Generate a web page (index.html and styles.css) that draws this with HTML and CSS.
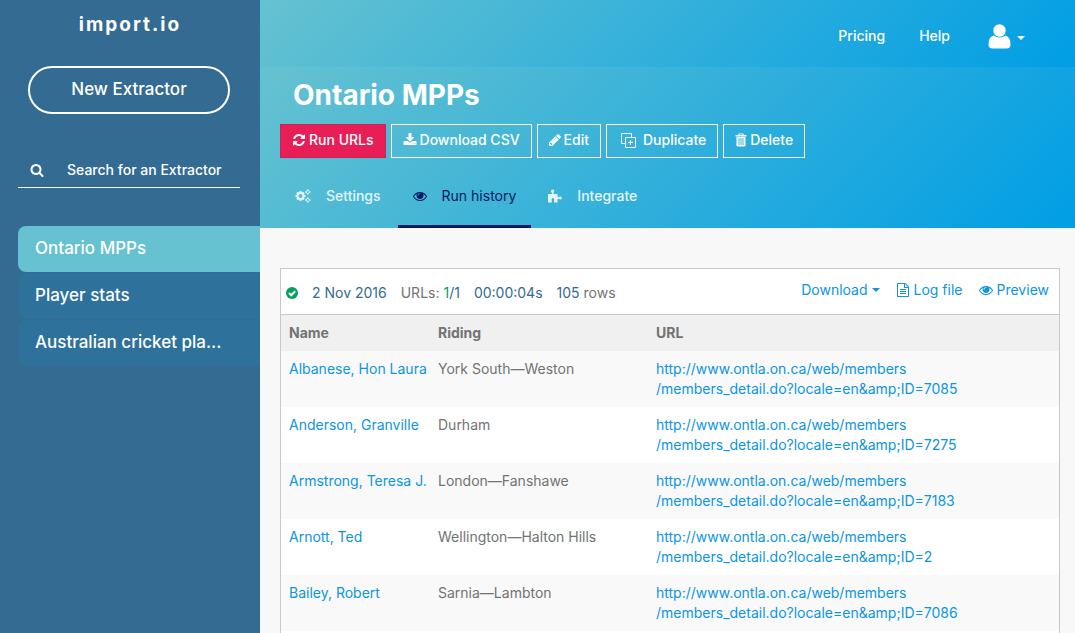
FILE: index.html
```html
<!DOCTYPE html>
<html lang="en">
<head>
<meta charset="utf-8">
<meta name="viewport" content="width=device-width, initial-scale=1">
<title>Ontario MPPs - import.io</title>
<link rel="stylesheet" href="styles.css">
</head>
<body>
<svg class="sprite" aria-hidden="true">
  <symbol id="eye" viewBox="0 0 1792 1792"><path d="M1664 960q-152-236-381-353 61 104 61 225 0 185-131.5 316.5t-316.5 131.5-316.5-131.5-131.5-316.5q0-121 61-225-229 117-381 353 133 205 333.5 326.5t434.5 121.5 434.5-121.5 333.5-326.5zm-720-384q0-20-14-34t-34-14q-125 0-214.5 89.5t-89.5 214.5q0 20 14 34t34 14 34-14 14-34q0-86 61-147t147-61q20 0 34-14t14-34zm848 384q0 34-20 69-140 230-376.5 368.5t-499.5 138.5-499.5-139-376.5-368q-20-35-20-69t20-69q140-229 376.5-368t499.5-139 499.5 139 376.5 368q20 35 20 69z"/></symbol>
</svg>
<div class="app">
  <aside class="sidebar">
    <a class="logo" href="#">import.io</a>
    <button class="new-extractor" type="button">New Extractor</button>
    <label class="search">
      <svg class="icon" viewBox="0 0 1792 1792" aria-hidden="true"><path d="M1216 832q0-185-131.5-316.5t-316.5-131.5-316.5 131.5-131.5 316.5 131.5 316.5 316.5 131.5 316.5-131.5 131.5-316.5zm512 832q0 52-38 90t-90 38q-54 0-90-38l-343-342q-179 124-399 124-143 0-273.5-55.5t-225-150-150-225-55.5-273.5 55.5-273.5 150-225 225-150 273.5-55.5 273.5 55.5 225 150 150 225 55.5 273.5q0 220-124 399l343 343q37 37 37 90z"/></svg>
      <input type="text" placeholder="Search for an Extractor" aria-label="Search for an Extractor">
    </label>
    <nav class="extractors">
      <a class="extractor active" href="#">Ontario MPPs</a>
      <a class="extractor" href="#">Player stats</a>
      <a class="extractor" href="#">Australian cricket pla...</a>
    </nav>
  </aside>
  <main class="main">
    <nav class="topbar">
      <a href="#">Pricing</a>
      <a href="#">Help</a>
      <button class="account" type="button" aria-label="Account">
        <svg class="user" viewBox="0 0 23 25" aria-hidden="true"><circle cx="11.500" cy="6.500" r="6.200"/><path d="M5.500 11.500Q11.500 15.500 17.500 11.500Q22.500 13 22.500 20.500Q22.500 24.500 18.500 24.500H4.500Q.5 24.500 .5 20.500Q.5 13 5.500 11.500Z"/></svg>
        <span class="caret"></span>
      </button>
    </nav>
    <header class="hero">
      <h1>Ontario MPPs</h1>
      <div class="actions">
        <button class="btn primary" type="button"><svg class="icon" viewBox="0 0 1792 1792" aria-hidden="true"><path d="M1639 1056q0 5-1 7-64 268-268 434.5t-478 166.500q-146 0-282.500-55t-243.500-157l-129 129q-19 19-45 19t-45-19-19-45v-448q0-26 19-45t45-19h448q26 0 45 19t19 45-19 45l-137 137q71 66 161 102t187 36q134 0 250-65t186-179q11-17 53-117 8-23 30-23h192q13 0 22.500 9.500t9.500 22.500zm25-800v448q0 26-19 45t-45 19h-448q-26 0-45-19t-19-45 19-45l138-138q-148-137-349-137-134 0-250 65t-186 179q-11 17-53 117-8 23-30 23h-199q-13 0-22.500-9.500t-9.500-22.500v-7q65-268 270-434.500t480-166.500q146 0 284 55.500t245 156.500l130-129q19-19 45-19t45 19 19 45z"/></svg>Run URLs</button>
        <button class="btn" type="button"><svg class="icon" viewBox="0 0 1792 1792" aria-hidden="true"><path d="M1344 1344q0-26-19-45t-45-19-45 19-19 45 19 45 45 19 45-19 19-45zm256 0q0-26-19-45t-45-19-45 19-19 45 19 45 45 19 45-19 19-45zm128-224v320q0 40-28 68t-68 28h-1472q-40 0-68-28t-28-68v-320q0-40 28-68t68-28h465l135 136q58 56 136 56t136-56l136-136h464q40 0 68 28t28 68zm-325-569q17 41-14 70l-448 448q-18 19-45 19t-45-19l-448-448q-31-29-14-70 17-39 59-39h256v-448q0-26 19-45t45-19h256q26 0 45 19t19 45v448h256q42 0 59 39z"/></svg>Download CSV</button>
        <button class="btn" type="button"><svg class="icon pencil" viewBox="128 128 1536 1536" aria-hidden="true"><path d="M491 1536l91-91-235-235-91 91v107h128v128h107zm523-928q0-22-22-22-10 0-17 7l-542 542q-7 7-7 17 0 22 22 22 10 0 17-7l542-542q7-7 7-17zm-54-192l416 416-832 832h-416v-416zm683 96q0 53-37 90l-166 166-416-416 166-165q36-38 90-38 53 0 91 38l235 234q37 39 37 91z"/></svg>Edit</button>
        <button class="btn wide" type="button"><svg class="icon copy" viewBox="0 0 15 15" aria-hidden="true"><path d="M4 10.500H.5V.5h10V4M4.500 4.500h10v10h-10zM9.500 7v5M7 9.500h5"/></svg>Duplicate</button>
        <button class="btn" type="button"><svg class="icon slim" viewBox="0 0 12 14" aria-hidden="true"><path d="M.5 3.500V2H3.500V.5h5V2h3v1.500zM4.500 2h3v-.7h-3z" fill-rule="evenodd"/><path d="M1.500 4h9v8.500l-1 1h-7l-1-1z"/><path class="bars" d="M3 5h6v7H3z"/></svg>Delete</button>
      </div>
      <nav class="tabs">
        <a class="tab" href="#"><svg class="icon gears" viewBox="0 0 16 14" aria-hidden="true"><circle cx="5.500" cy="7" r="3"/><path d="M5.500 2v2M5.500 10v2M.5 7h2M8.500 7h2M2 3.500L3.500 5M7.500 9l1.500 1.500M2 10.500L3.500 9M7.500 5L9 3.500"/><g class="small-gears"><circle cx="12.800" cy="3" r="1.600"/><circle cx="12.800" cy="11" r="1.600"/><path d="M12.800.2v1M12.800 4.800v1M10 3h1M14.600 3h1M12.800 8.200v1M12.800 12.800v1M10 11h1M14.600 11h1"/></g></svg>Settings</a>
        <a class="tab active" href="#" aria-current="page"><svg class="icon" aria-hidden="true"><use href="#eye"/></svg>Run history</a>
        <a class="tab" href="#"><svg class="icon" viewBox="0 0 14 14" aria-hidden="true"><path d="M0 5h4V4Q2.800 2.800 3.200 1.500Q4.700-.5 6.200 1.500Q6.600 2.800 5.400 4v1H9.500v3h1.500Q12 7 13.200 7.600Q14.400 9 13.200 10.300Q12 10.800 11 10H9.500v3.500H6V11.700Q6.800 9.500 5 9Q3 9.200 3.800 11.700v1.800H0z"/></svg>Integrate</a>
      </nav>
    </header>
    <section class="panel">
      <div class="run">
        <svg class="status" viewBox="0 0 12 12" role="img" aria-label="Succeeded"><circle cx="6" cy="6" r="6"/><path d="M3 6l2.200 2.300L9.200 4.300"/></svg>
        <div class="facts">
          <span>2 Nov 2016</span>
          <span><span class="muted">URLs:</span> <span class="ok">1</span>/1</span>
          <span>00:00:04s</span>
          <span>105 <span class="muted">rows</span></span>
        </div>
        <div class="links">
          <a href="#">Download<span class="caret"></span></a>
          <a href="#"><svg class="icon" viewBox="0 0 1792 1792" aria-hidden="true"><path d="M1596 380q28 28 48 76t20 88v1152q0 40-28 68t-68 28h-1344q-40 0-68-28t-28-68v-1600q0-40 28-68t68-28h896q40 0 88 20t76 48zm-444-244v376h376q-10-29-22-41l-313-313q-12-12-41-22zm384 1528v-1024h-416q-40 0-68-28t-28-68v-416h-768v1536h1280zm-1024-864q0-14 9-23t23-9h704q14 0 23 9t9 23v64q0 14-9 23t-23 9h-704q-14 0-23-9t-9-23v-64zm736 224q14 0 23 9t9 23v64q0 14-9 23t-23 9h-704q-14 0-23-9t-9-23v-64q0-14 9-23t23-9h704zm0 256q14 0 23 9t9 23v64q0 14-9 23t-23 9h-704q-14 0-23-9t-9-23v-64q0-14 9-23t23-9h704z"/></svg>Log file</a>
          <a href="#"><svg class="icon" aria-hidden="true"><use href="#eye"/></svg>Preview</a>
        </div>
      </div>
      <table class="rows">
        <colgroup><col class="col-name"><col class="col-riding"><col></colgroup>
        <thead><tr><th>Name</th><th>Riding</th><th>URL</th></tr></thead>
        <tbody>
          <tr><td><a href="#">Albanese, Hon Laura</a></td><td>York South—Weston</td><td><a href="#">http://www.ontla.on.ca/web/members<br>/members_detail.do?locale=en&amp;amp;ID=7085</a></td></tr>
          <tr><td><a href="#">Anderson, Granville</a></td><td>Durham</td><td><a href="#">http://www.ontla.on.ca/web/members<br>/members_detail.do?locale=en&amp;amp;ID=7275</a></td></tr>
          <tr><td><a href="#">Armstrong, Teresa J.</a></td><td>London—Fanshawe</td><td><a href="#">http://www.ontla.on.ca/web/members<br>/members_detail.do?locale=en&amp;amp;ID=7183</a></td></tr>
          <tr><td><a href="#">Arnott, Ted</a></td><td>Wellington—Halton Hills</td><td><a href="#">http://www.ontla.on.ca/web/members<br>/members_detail.do?locale=en&amp;amp;ID=2</a></td></tr>
          <tr><td><a href="#">Bailey, Robert</a></td><td>Sarnia—Lambton</td><td><a href="#">http://www.ontla.on.ca/web/members<br>/members_detail.do?locale=en&amp;amp;ID=7086</a></td></tr>
        </tbody>
      </table>
    </section>
  </main>
</div>
</body>
</html>
```

FILE: styles.css
```css
* { box-sizing: border-box; }
body {
  margin: 0;
  font: 14px/20px Inter, "Liberation Sans", sans-serif;
  color: #737373;
  background: #f8f8f8;
}
a { color: #0c95e0; text-decoration: none; }
button, input { font: inherit; color: inherit; }
button { cursor: pointer; }
.sprite { display: none; }
.icon { width: 14px; height: 14px; fill: currentColor; flex: none; }
.caret {
  border: 4px solid transparent;
  border-top-color: currentColor;
  border-bottom: 0;
}
.app { display: flex; height: 100vh; overflow: hidden; }

.sidebar {
  flex: 0 0 260px;
  min-width: 0;
  display: flex;
  flex-direction: column;
  background: #336b92;
  color: #fff;
}
.sidebar a { color: #fff; }
.logo {
  align-self: center;
  margin-top: 13px;
  font-size: 19px;
  line-height: 24px;
  font-weight: 700;
  letter-spacing: 2px;
}
.new-extractor {
  margin: 29px 30px 0 28px;
  height: 48px;
  padding: 0 0 2px;
  border: 2px solid #fff;
  border-radius: 24px;
  background: none;
  font-size: 17px;
  font-weight: 500;
}
.search {
  display: flex;
  align-items: center;
  gap: 23px;
  margin: 39px 20px 38px 18px;
  padding: 0 12px;
  height: 35px;
  border-bottom: 1px solid #fff;
}
.search input {
  flex: 1;
  min-width: 0;
  padding: 0;
  border: 0;
  outline: 0;
  background: none;
  font-weight: 500;
}
.search input::placeholder { color: #fff; opacity: 1; }
.extractors { display: flex; flex-direction: column; gap: 1px; padding-left: 18px; }
.extractor {
  padding: 10px 17px 12px;
  border-radius: 8px 0 0 8px;
  background: #2e719b;
  font-size: 17px;
  line-height: 24px;
  font-weight: 500;
  white-space: nowrap;
}
.extractor.active { background: #66c2d0; }

.main { flex: 1; min-width: 0; display: flex; flex-direction: column; }
.topbar, .hero { background: linear-gradient(135deg, #66c2d0, #009ee5); color: #fff; }
.topbar {
  display: flex;
  align-items: center;
  justify-content: flex-end;
  gap: 34px;
  height: 67px;
  padding: 5px 50px 0 0;
}
.topbar a { color: #fff; font-weight: 500; }
.account {
  display: flex;
  align-items: center;
  gap: 6px;
  padding: 0;
  margin-left: 4px;
  border: 0;
  background: none;
}
.user { width: 23px; height: 25px; fill: currentColor; }
.account .caret { margin-top: 4px; }
.hero { padding: 10px 20px 0; }
.hero h1 { margin: 0 0 11px 13px; font-size: 28px; line-height: 36px; font-weight: 700; }
.actions { display: flex; gap: 5px; }
.btn {
  display: flex;
  align-items: center;
  gap: 3px;
  height: 34px;
  padding: 0 11px 2px;
  border: 1px solid #fff;
  background: none;
  font-weight: 500;
  white-space: nowrap;
}
.btn.primary { background: #e81e56; border-color: #cf1f55; }
.btn.wide { gap: 7px; padding-left: 14px; }
.icon.copy { width: 15px; height: 15px; fill: none; stroke: currentColor; }
.icon.slim { width: 12px; }
.icon.pencil { width: 12px; height: 12px; }
.bars { fill: #32afd9; opacity: .45; }
.tabs { display: flex; gap: 2px; margin-top: 8px; }
.tab {
  display: flex;
  align-items: center;
  gap: 15px;
  height: 62px;
  padding: 0 15px;
  border-bottom: 3px solid transparent;
  color: #e3f5fb;
  font-weight: 500;
}
.tab.active { color: #00195f; border-color: #00195f; font-weight: 400; }
.icon.gears { width: 16px; fill: none; stroke: currentColor; stroke-width: 2; }
.small-gears { stroke-width: 1; }

.panel {
  flex: 1;
  min-height: 0;
  margin: 40px 15px 0 20px;
  border: 1px solid #c8c8c8;
  border-bottom: 0;
  background: #fff;
  overflow: hidden;
}
.run {
  display: flex;
  align-items: center;
  height: 46px;
  padding: 2px 10px 0 5px;
  border-bottom: 1px solid #c8c8c8;
  white-space: nowrap;
}
.status { width: 12px; height: 12px; fill: #05a05a; }
.status path { fill: none; stroke: #fff; stroke-width: 2; }
.facts { display: flex; gap: 14px; margin-left: 14px; color: #336b92; }
.muted { color: #737373; }
.ok { color: #05a05a; }
.links { display: flex; gap: 16px; margin-left: auto; padding-bottom: 5px; }
.links a { display: flex; align-items: center; gap: 4px; }
.rows { width: 100%; border-collapse: collapse; table-layout: fixed; }
.col-name { width: 149px; }
.col-riding { width: 218px; }
.rows th, .rows td { padding: 8px; text-align: left; vertical-align: top; }
.rows td { white-space: nowrap; }
.rows th { font-weight: 700; background: #f0f0f0; }
.rows tbody tr:nth-child(odd) { background: #f9f9f9; }
```
